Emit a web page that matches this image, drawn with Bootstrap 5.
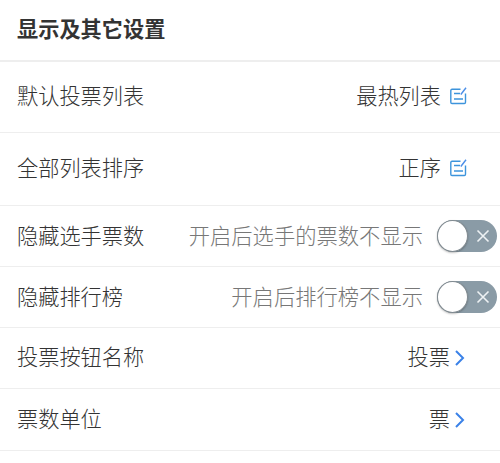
<!DOCTYPE html>
<html lang="zh">
<head>
<meta charset="utf-8">
<link rel="stylesheet" href="https://cdn.jsdelivr.net/npm/bootstrap@5.3.0/dist/css/bootstrap.min.css">
<style>
body{background:#fff;font-family:"Noto Sans CJK SC","Liberation Sans",sans-serif;color:#333;overflow:hidden}
.set-head{height:62px;padding:0 17px 4px;font-size:21.2px;font-weight:700;color:#333;border-bottom:2px solid #eee}
.set-row{padding:0 3px 0 17px;font-size:21.2px;font-weight:300;border-bottom:1px solid #eee;line-height:1.2}
.set-row>span{margin-top:-2px}
.set-first{height:71px}
.set-tall{height:73px}
.set-short{height:61px}
.set-last{height:62px}
.set-val{margin-top:-2px}
.set-hint{color:#777;margin-right:14px;margin-top:-2px;font-size:21.3px}
.set-ico{margin:-3px 30px 0 9px;display:block}
.set-arrow{margin-left:5px;margin-right:32px;display:block}
.set-row .set-lift{margin-top:-4px}
.set-toggle{width:60px;height:32px;border-radius:16px;background:#8a9ba6;position:relative}
.set-knob{width:31px;height:32px;border-radius:50%;background:#fff;border:1.5px solid #808a90;box-shadow:0 1px 2px rgba(0,0,0,.25);position:absolute;left:0;top:0}
.set-x{position:absolute;right:7px;top:9px;display:block}
</style>
</head>
<body>
<div class="d-flex flex-column">
  <div class="set-head d-flex align-items-center">显示及其它设置</div>

  <div class="set-row set-first d-flex align-items-center justify-content-between">
    <span class="set-lift">默认投票列表</span>
    <div class="d-flex align-items-center">
      <span class="set-val set-lift">最热列表</span>
      <svg class="set-ico" width="17" height="18" viewBox="0 0 17 18" fill="none" stroke="#3d94dc" stroke-width="1.4"><path d="M10.500 2.300H2a1.200 1.200 0 0 0-1.200 1.200V15.300a1.200 1.200 0 0 0 1.200 1.200h12.300a1.200 1.200 0 0 0 1.200-1.200V6.500"/><path d="M4 6.500h6M4 12h9"/><path d="M10.800 7.500L16 .8" stroke="#4a8ee8"/></svg>
    </div>
  </div>

  <div class="set-row set-tall d-flex align-items-center justify-content-between">
    <span class="set-lift">全部列表排序</span>
    <div class="d-flex align-items-center">
      <span class="set-val set-lift">正序</span>
      <svg class="set-ico" width="17" height="18" viewBox="0 0 17 18" fill="none" stroke="#3d94dc" stroke-width="1.4"><path d="M10.500 2.300H2a1.200 1.200 0 0 0-1.200 1.200V15.300a1.200 1.200 0 0 0 1.200 1.200h12.300a1.200 1.200 0 0 0 1.200-1.200V6.500"/><path d="M4 6.500h6M4 12h9"/><path d="M10.800 7.500L16 .8" stroke="#4a8ee8"/></svg>
    </div>
  </div>

  <div class="set-row set-short d-flex align-items-center justify-content-between">
    <span>隐藏选手票数</span>
    <div class="d-flex align-items-center">
      <span class="set-hint">开启后选手的票数不显示</span>
      <div class="set-toggle"><div class="set-knob"></div>
        <svg class="set-x" width="14" height="14" viewBox="0 0 14 14" stroke="#eef2f4" stroke-width="1.6"><path d="M1.500 1.500l11 11M12.500 1.500l-11 11"/></svg></div>
    </div>
  </div>

  <div class="set-row set-short d-flex align-items-center justify-content-between">
    <span>隐藏排行榜</span>
    <div class="d-flex align-items-center">
      <span class="set-hint">开启后排行榜不显示</span>
      <div class="set-toggle"><div class="set-knob"></div>
        <svg class="set-x" width="14" height="14" viewBox="0 0 14 14" stroke="#eef2f4" stroke-width="1.6"><path d="M1.500 1.500l11 11M12.500 1.500l-11 11"/></svg></div>
    </div>
  </div>

  <div class="set-row set-short d-flex align-items-center justify-content-between">
    <span class="set-lift">投票按钮名称</span>
    <div class="d-flex align-items-center">
      <span class="set-val set-lift">投票</span>
      <svg class="set-arrow" width="10" height="16" viewBox="0 0 10 16" fill="none" stroke="#3b82e8" stroke-width="2"><path d="M1 1l7 7-7 7"/></svg>
    </div>
  </div>

  <div class="set-row set-last d-flex align-items-center justify-content-between">
    <span class="set-lift">票数单位</span>
    <div class="d-flex align-items-center">
      <span class="set-val set-lift">票</span>
      <svg class="set-arrow" width="10" height="16" viewBox="0 0 10 16" fill="none" stroke="#3b82e8" stroke-width="2"><path d="M1 1l7 7-7 7"/></svg>
    </div>
  </div>
</div>
</body>
</html>
